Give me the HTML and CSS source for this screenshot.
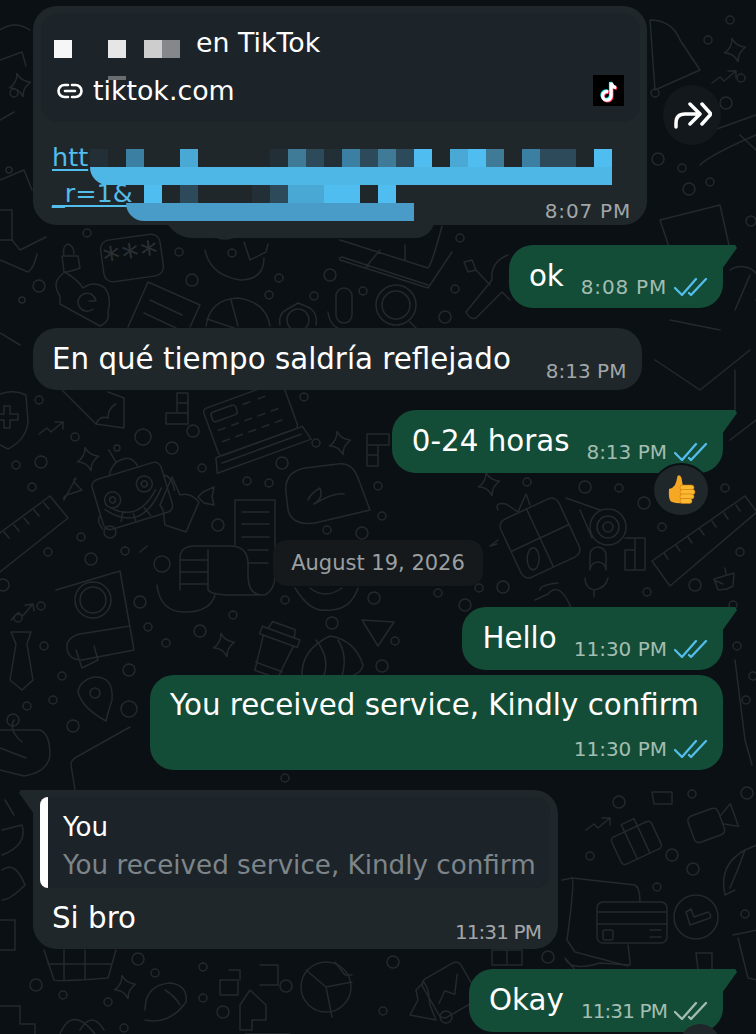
FILE: index.html
```html
<!DOCTYPE html>
<html lang="en">

<head>
    <meta charset="UTF-8">
    <meta name="viewport" content="width=device-width, initial-scale=1.0">
    <title>Chat</title>
    <link rel="stylesheet" href="styles.css">
</head>

<body>

    <!-- wallpaper doodles, hand placed -->
    <svg class="doodles" viewBox="0 0 756 1034" aria-hidden="true">
        <defs>
            <path id="star" d="M0 -12Q2 -3 11 0Q2 3 0 12Q-2 3 -11 0Q-2 -3 0 -12Z" />
            <path id="trend" d="M0 8L8 2L12 6L24 -4M16 -4H24V3" />
        </defs>
        <g class="dots-small">
            <circle cx="39" cy="400" r="4" /><circle cx="75" cy="437" r="4" /><circle cx="16" cy="465" r="4" />
            <circle cx="117" cy="448" r="3" /><circle cx="202" cy="468" r="4" /><circle cx="32" cy="487" r="4" />
            <circle cx="247" cy="481" r="4" /><circle cx="269" cy="483" r="4" /><circle cx="316" cy="443" r="4" />
            <circle cx="304" cy="397" r="4" /><circle cx="378" cy="486" r="4" /><circle cx="382" cy="516" r="4" />
            <circle cx="81" cy="537" r="4" /><circle cx="48" cy="552" r="4" /><circle cx="125" cy="551" r="4" />
            <circle cx="327" cy="530" r="4" /><circle cx="41" cy="606" r="4" /><circle cx="285" cy="600" r="4" />
            <circle cx="18" cy="618" r="4" /><circle cx="44" cy="646" r="4" /><circle cx="62" cy="676" r="4" />
            <circle cx="53" cy="700" r="4" /><circle cx="27" cy="706" r="4" /><circle cx="148" cy="627" r="4" />
            <circle cx="166" cy="643" r="4" /><circle cx="233" cy="615" r="4" /><circle cx="395" cy="641" r="4" />
            <circle cx="285" cy="778" r="4" /><circle cx="63" cy="995" r="4" /><circle cx="155" cy="973" r="4" />
            <circle cx="203" cy="967" r="4" /><circle cx="203" cy="998" r="4" /><circle cx="108" cy="1002" r="4" />
            <circle cx="383" cy="1011" r="4" /><circle cx="124" cy="1028" r="4" /><circle cx="87" cy="233" r="4" />
            <circle cx="179" cy="252" r="4" /><circle cx="232" cy="253" r="4" /><circle cx="460" cy="238" r="4" />
            <circle cx="279" cy="278" r="4" /><circle cx="269" cy="295" r="4" /><circle cx="314" cy="296" r="4" />
            <circle cx="363" cy="291" r="4" /><circle cx="455" cy="289" r="4" /><circle cx="527" cy="482" r="4" />
            <circle cx="619" cy="488" r="4" /><circle cx="662" cy="527" r="4" /><circle cx="725" cy="488" r="4" />
            <circle cx="740" cy="552" r="4" /><circle cx="647" cy="592" r="4" /><circle cx="479" cy="588" r="4" />
            <circle cx="438" cy="593" r="4" /><circle cx="692" cy="794" r="4" /><circle cx="590" cy="856" r="4" />
            <circle cx="657" cy="887" r="4" /><circle cx="745" cy="914" r="4" /><circle cx="655" cy="93" r="4" />
            <circle cx="682" cy="168" r="4" /><circle cx="710" cy="182" r="4" /><circle cx="741" cy="78" r="4" />
            <circle cx="737" cy="646" r="4" /><circle cx="746" cy="700" r="4" /><circle cx="733" cy="605" r="4" />
            <circle cx="753" cy="676" r="4" /><circle cx="730" cy="20" r="4" /><circle cx="14" cy="93" r="4" />
            <circle cx="22" cy="300" r="3" /><circle cx="708" cy="40" r="4" /><circle cx="9" cy="170" r="3" />
        </g>
        <g class="dots-big">
            <circle cx="143" cy="437" r="8" /><circle cx="193" cy="431" r="6" /><circle cx="172" cy="448" r="6" />
            <circle cx="41" cy="462" r="6" /><circle cx="282" cy="463" r="6" /><circle cx="218" cy="525" r="6" />
            <circle cx="91" cy="559" r="6" /><circle cx="162" cy="564" r="8" /><circle cx="110" cy="532" r="6" />
            <circle cx="362" cy="533" r="6" /><circle cx="3" cy="585" r="6" /><circle cx="140" cy="602" r="6" />
            <circle cx="374" cy="598" r="6" /><circle cx="129" cy="670" r="6" /><circle cx="129" cy="709" r="8" />
            <circle cx="73" cy="726" r="6" /><circle cx="200" cy="631" r="6" /><circle cx="332" cy="623" r="6" />
            <circle cx="382" cy="666" r="6" /><circle cx="36" cy="985" r="6" /><circle cx="138" cy="959" r="6" />
            <circle cx="286" cy="986" r="6" /><circle cx="223" cy="1012" r="6" /><circle cx="393" cy="962" r="6" />
            <circle cx="39" cy="286" r="6" /><circle cx="192" cy="280" r="6" /><circle cx="330" cy="275" r="6" />
            <circle cx="445" cy="317" r="6" /><circle cx="585" cy="487" r="6" /><circle cx="644" cy="503" r="6" />
            <circle cx="695" cy="585" r="6" /><circle cx="503" cy="587" r="6" /><circle cx="465" cy="605" r="6" />
            <circle cx="619" cy="802" r="6" /><circle cx="747" cy="793" r="6" /><circle cx="672" cy="855" r="6" />
            <circle cx="693" cy="869" r="6" /><circle cx="548" cy="957" r="6" /><circle cx="446" cy="1017" r="6" />
            <circle cx="658" cy="159" r="6" /><circle cx="689" cy="189" r="6" /><circle cx="751" cy="221" r="5" />
            <circle cx="726" cy="103" r="6" />
        </g>
        <g class="shapes">
            <use href="#star" transform="translate(88 459) rotate(-15)" />
            <use href="#star" transform="translate(340 443) rotate(-15)" />
            <use href="#star" transform="translate(224 645) rotate(-15)" />
            <use href="#star" transform="translate(125 987) rotate(-15)" />
            <use href="#star" transform="translate(489 484) rotate(-15)" />
            <use href="#star" transform="translate(20 85) rotate(-15)" />
            <use href="#star" transform="translate(735 50) rotate(-15)" />
            <use href="#trend" transform="translate(39 426)" />
            <use href="#trend" transform="translate(586 822)" />
            <use href="#trend" transform="translate(10 612) rotate(-10)" />
            <use href="#trend" transform="translate(712 75)" />
            <!-- shield -->
            <path d="M0 394Q14 389 26 395L28 422Q26 440 8 449L0 445M0 414H4V406H10V414H18V420H10V428H4V420H0" />
            <!-- pencil -->
            <path d="M62 390L96 424L124 428L124 398L108 392M96 424Q100 415 108 418Q108 408 116 404" />
            <!-- tetris -->
            <path d="M177 393H188V424H166V413H177ZM177 403H188M177 413H188" />
            <path d="M367 434H389V445H378V466H367ZM367 445H378V455H367" />
            <path d="M625 538H645V570H625V550H635M635 538V570" />
            <!-- cash register -->
            <g transform="translate(254 428) rotate(-20)">
                <rect x="-42" y="-35" width="84" height="50" rx="4" />
                <rect x="-36" y="-29" width="26" height="10" rx="3" />
                <path d="M-34 -10h7M-20 -10h7M-6 -10h7M8 -10h7M22 -10h7M-34 2h7M-20 2h7M-6 2h7M8 2h7M22 2h7M-2 -26h7M14 -26h7" />
                <path d="M-46 15H46L50 30H-50ZM-42 22H42" />
            </g>
            <!-- robot face -->
            <g transform="translate(132 495) rotate(-17)">
                <rect x="-36" y="-25" width="72" height="52" rx="7" />
                <circle cx="-20" cy="-1" r="8" /><circle cx="-20" cy="-1" r="3" />
                <circle cx="15" cy="-7" r="8" /><circle cx="15" cy="-7" r="3" />
                <path d="M-30 6Q-2 40 30 2M-24 6Q-2 28 24 2M-14 14L-18 22M-4 18V27M8 16L12 25" />
                <path d="M-16 -25Q-10 -38 4 -37Q12 -36 14 -25M-6 -37L-9 -50" />
                <path d="M36 -10Q44 -6 42 8M-36 10Q-42 14 -38 24" />
            </g>
            <path d="M172 477L180 495Q190 492 199 502L186 532L165 525L163 510L160 505Z" />
            <path d="M203 492L214 487L212 497L214 505L204 503L198 497Z" />
            <path d="M76 478L64 500Q62 496 70 494L82 490Q70 480 76 478Z" />
            <!-- ruler left -->
            <path d="M0 533L50 496L68 518L0 572M4 532L9 538M14 525L19 531M24 518L29 524M34 510L39 516M44 503L49 509" />
            <!-- magnifier -->
            <path d="M140 552L147 546" />
            <!-- signature bubble -->
            <path d="M286 492Q284 472 305 468L338 464Q352 462 358 478L370 510L315 523Q292 526 288 510ZM308 500Q310 494 320 488Q324 498 314 504Q334 492 344 494" />
            <!-- receipts -->
            <path d="M235 500H275V548M235 500V545M242 512H269M242 524H269M242 537H269" />
            <path d="M180 590V558Q180 546 195 546H230Q248 546 248 564V575Q248 595 262 595M180 560H208M180 572H208M180 584H208M208 550V590Q212 595 232 595H265Q275 590 275 575V552M248 550H268M248 563H268" />
            <path d="M157 585Q160 612 185 612Q210 612 215 595" />
            <!-- target plate -->
            <path d="M295 588Q310 612 325 610Q350 612 358 588M310 588Q325 600 342 588" />
            <!-- book -->
            <path d="M56 590L120 571L134 650L82 660Q66 660 67 644Q70 636 80 634L130 626M76 650L82 668L98 660L94 646" />
            <circle cx="93" cy="600" r="18" /><circle cx="93" cy="600" r="13" />
            <!-- tie -->
            <path d="M11 632H31L27 644L33 680L22 690L10 680L16 644Z" />
            <!-- pin -->
            <path d="M94 677Q114 676 112 700Q108 712 106 721Q82 708 78 692Q80 680 94 677Z" /><circle cx="95" cy="693" r="5" />
            <!-- coffee cup -->
            <g transform="translate(275 650) rotate(20)">
                <path d="M-16 -10L-12 26H12L16 -10M-20 -10H20V-18H-20ZM-14 -18L-12 -26H12L14 -18M-14 18H14" />
            </g>
            <!-- croissant -->
            <path d="M302 678Q300 650 330 636Q355 640 363 665Q362 672 352 676M316 640Q332 660 322 680M338 640Q348 656 342 676" />
            <!-- send arrow -->
            <path d="M362 620L394 622L378 646Z" />
            <!-- pushpin and note -->
            <path d="M0 730H40Q50 734 50 755Q48 772 24 776L0 770M14 720Q8 730 22 742M0 748L26 758" /><circle cx="13" cy="720" r="6" />
            <!-- rounded card behind green -->
            <path d="M75 790L71 765Q70 760 80 755L130 727" />
            <!-- lock -->
            <path d="M62 256H78L80 268Q70 272 64 272ZM64 256Q62 246 68 244Q74 246 74 254" />
            <!-- password -->
            <g transform="translate(132 258) rotate(-8)">
                <rect x="-30" y="-21" width="60" height="42" rx="9" />
                <text class="stars" x="0" y="10" text-anchor="middle">***</text>
            </g>
            <!-- check box -->
            <path d="M0 260L28 272Q34 268 37 254M12 240L20 250L46 237" />
            <!-- cloud -->
            <path d="M60 296Q50 282 65 272Q78 280 83 288Q94 280 105 288Q112 298 108 312Q110 322 100 326L60 304Z" />
            <path d="M96 301A9 9 0 1 0 93 309M92 294L96 301L89 301" />
            <!-- receipt -->
            <path d="M128 327L148 282L200 305L190 327M150 300L182 315M144 313L176 328" />
            <!-- pie -->
            <path d="M206 326Q210 299 238 298Q266 302 270 326M231 300L238 326M207 319L234 328" />
            <!-- head -->
            <path d="M205 250Q210 275 240 280Q264 280 264 258M244 242L250 260L266 252L268 244M210 230Q220 245 238 235" />
            <!-- gear -->
            <circle cx="298" cy="320" r="11" /><path d="M280 325Q278 314 286 310L298 303L310 308Q318 314 316 325" />
            <!-- mic -->
            <path d="M336 296A8 8 0 0 1 352 296V315A8 8 0 0 1 336 315ZM328 312Q330 328 344 330Q356 328 352 330" />
            <path d="M585 578Q585 588 594 590Q606 588 608 578M594 590V597" />
            <path d="M590 570A8 8 0 0 1 606 570V565M590 570V555A8 8 0 0 1 606 555V570" />
            <!-- magnifier mid -->
            <circle cx="396" cy="305" r="20" /><circle cx="396" cy="305" r="14" /><path d="M410 322L418 330" />
            <!-- laptop -->
            <path d="M340 240L428 268Q432 264 442 226M452 252L428 288L340 260Q338 258 342 257L428 285M380 250L365 268M405 260V245" />
            <!-- wrench -->
            <path d="M464 262L472 260L476 270L468 272ZM476 270L490 285M508 255Q490 262 492 280L466 312Q470 320 476 318L502 292L510 300" />
            <!-- gift -->
            <g transform="translate(540 538) rotate(-25)">
                <rect x="-32" y="-32" width="64" height="64" rx="8" />
                <path d="M0 -32V32M-32 0H32" />
                <ellipse cx="-15" cy="16" rx="6" ry="11" transform="rotate(25 -15 16)" />
            </g>
            <path d="M498 510Q494 502 506 504L518 512L526 494L530 505M498 540L490 546L497 544" />
            <!-- tape -->
            <circle cx="608" cy="527" r="18" /><circle cx="608" cy="527" r="11" /><circle cx="608" cy="527" r="5" />
            <path d="M566 498L600 510M580 510L592 538" />
            <!-- ruler right -->
            <path d="M652 561L745 496L757 512L670 586ZM664 553L668 559M676 545L680 551M688 537L692 543M700 529L704 535M712 521L716 527M724 513L728 519M736 505L740 511" />
            <!-- bottle -->
            <path d="M714 579L734 573L733 586L727 589L718 590ZM725 568L726 574M714 580L723 584" />
            <!-- phone corner -->
            <path d="M535 600L548 594Q560 580 572 610M540 590Q540 585 558 583" />
            <!-- card and phone -->
            <path d="M562 880L572 878L635 885Q640 888 640 902M592 990L565 958Q570 972 600 963L630 965Q630 960 628 945" />
            <path d="M572 878Q575 880 567 940L575 952L628 966" />
            <rect x="597" y="902" width="70" height="41" rx="6" />
            <path d="M597 912H667M597 924H667M650 930H661M650 937H661" /><rect x="603" y="930" width="10" height="10" rx="2" />
            <!-- clock -->
            <circle cx="696" cy="917" r="22" /><path d="M686 912L690 925L710 918Q712 915 708 912L694 917L691 909Z" />
            <!-- suitcase -->
            <g transform="translate(636 842) rotate(-25)">
                <rect x="-22" y="-14" width="44" height="30" rx="4" />
                <path d="M-6 -14V16M8 -14V16M-6 -14V-22H8V-14" />
            </g>
            <!-- camera -->
            <g transform="translate(710 824) rotate(-20)">
                <rect x="-20" y="-14" width="32" height="28" rx="5" />
                <path d="M12 -4L26 -12V12L12 4" />
            </g>
            <path d="M652 792H672V804H654Z" />
            <!-- balloon -->
            <path d="M725 895Q718 865 745 850L757 845M725 895L735 890M730 888Q738 870 745 850" />
            <!-- jar -->
            <path d="M733 935L757 930M738 938L748 978L757 980" />
            <path d="M696 953H712V970H698Z" />
            <!-- chart card -->
            <g transform="translate(450 990) rotate(-30)">
                <rect x="-22" y="-22" width="44" height="44" rx="6" />
                <path d="M-16 6L-5 -2L2 6L14 -10" />
            </g>
            <!-- bottle bottom -->
            <path d="M410 1015L418 1000L416 990L424 982L428 990L430 1005L436 1020Z" />
            <!-- tetris bottom -->
            <path d="M492 950H522V965H492ZM507 950V965" />
            <!-- basket -->
            <path d="M44 950L54 980Q56 982 108 978L116 950M64 950V980M85 950V980M48 964H112" />
            <!-- pie bottom left -->
            <circle cx="326" cy="987" r="25" /><path d="M306 970L326 987M326 987L332 1017M326 987L352 982M335 962L345 975H352" />
            <!-- taco -->
            <path d="M145 1010Q145 985 170 983Q188 985 186 1002Q170 1025 145 1020M165 990Q175 996 180 1005" />
            <!-- small bits -->
            <path d="M220 980H238V995H220ZM229 970H240V980M260 965H278V985H260" />
            <path d="M240 1005L250 990L266 1005V1020H252V1030H240Z" />
            <path d="M0 1006H20V1024H35V1034M20 1006V1024" />
            <path d="M60 1034Q72 1005 95 1034" /><path d="M80 1030Q92 1010 104 1030" />
            <path d="M245 1034H290" />
            <path d="M0 30Q15 20 30 30M0 60L22 52L26 66" />
            <path d="M650 20Q672 20 680 40L700 70L655 90Z" />
            <path d="M714 130L756 115M740 135L756 150M700 165Q710 155 756 135" />
            <path d="M660 220L720 205L730 250H670Z" />
            <path d="M0 120L14 112M0 180L24 170L32 190" />
            <path d="M0 210H12V240H0" />
            <path d="M660 290L700 300M670 320L720 330M735 310L750 275" />
            <path d="M655 360L700 390L750 350M735 370V410" />
            <path d="M0 333L20 345" />
            <path d="M655 420L700 430M730 440L756 420" />
            <path d="M730 270A20 20 0 0 1 756 300" />
            <path d="M735 660L745 740L752 765" />
            <path d="M5 800L14 815M2 830L22 825Q28 845 2 855" />
            <path d="M2 870Q15 860 25 885Q10 900 2 900" />
            <path d="M0 920H15V950H0" />
        </g>
    </svg>

    <div class="chat">

        <div class="msg msg-in link-msg">
            <div class="preview">
                <div class="preview-title">
                    <div class="name-pixels">
                        <i class="p-white"></i><i></i><i></i><i class="p-light"></i><i></i><i class="p-mid"></i><i class="p-grey"></i>
                    </div>
                    <span>en TikTok</span>
                    <b class="pixel-strip"></b>
                </div>
                <div class="preview-site">
                    <svg class="link-icon" viewBox="0 0 26 18">
                        <path d="M11 3H7.500a6 6 0 0 0 0 12H11M15 3h3.500a6 6 0 0 1 0 12H15M8 9h10" />
                    </svg>
                    <span>tiktok.com</span>
                    <svg class="tiktok-logo" viewBox="0 0 31 31">
                        <rect width="31" height="31" fill="#000" />
                        <g fill="none" stroke-width="3.200">
                            <path stroke="#25f4ee" d="M14.500 16a4.300 4.300 0 1 0 3 4V7q.5 4 5 5" />
                            <path stroke="#fe2c55" d="M16 17.500a4.300 4.300 0 1 0 3 4V8.500q.5 4 5 5" />
                            <path stroke="#fff" d="M15.200 16.800a4.300 4.300 0 1 0 3 4V7.800q.5 4 5 5" />
                        </g>
                    </svg>
                </div>
            </div>
            <div class="link-body">
                <div class="link-text">
                    <a>htt</a><br>
                    <a>_r=1&amp;</a>
                </div>
                <span class="time time-wide">8:07 PM</span>
                <div class="redact">
                    <i class="b-1"></i><i></i><i class="b-4"></i><i></i><i></i><i class="b-5"></i><i></i><i></i><i></i><i></i>
                    <i class="b-1"></i><i class="b-3"></i><i class="b-2"></i><i class="b-1"></i><i class="b-4"></i><i class="b-2"></i><i class="b-3"></i><i class="b-2"></i><i class="b-6"></i><i></i>
                    <i class="b-5"></i><i class="b-6"></i><i class="b-3"></i><i></i><i class="b-4"></i><i class="b-2"></i><i class="b-2"></i><i></i><i class="b-6"></i>
                    <i class="band-top"></i>
                    <i></i><i></i><i></i><i class="b-6"></i><i></i><i class="b-2"></i><i></i><i></i><i></i><i class="b-1"></i>
                    <i class="b-2"></i><i class="b-5"></i><i class="b-5"></i><i class="b-6"></i><i class="b-6"></i><i></i><i class="b-6"></i>
                    <i></i><i></i><i></i><i></i><i></i><i></i><i></i><i></i><i></i><i></i><i></i>
                    <i class="band-bottom"></i>
                </div>
            </div>
            <div class="blob"></div>
            <div class="forward">
                <svg viewBox="0 0 40 28">
                    <path d="M4 26V22Q4 13 13 13H27M18 3L28 13L18 23M30 3L39 13L30 23" />
                </svg>
            </div>
        </div>

        <div class="msg msg-out tail gap-lg">
            <span class="text">ok</span>
            <span class="meta"><span class="time time-wide">8:08 PM</span>
                <svg class="ticks" viewBox="0 0 34 20"><path d="M1 11L8 18L22 2M15 16L17 18L32 2" /></svg></span>
        </div>

        <div class="msg msg-in gap-lg roomy">
            <span class="text">En qué tiempo saldría reflejado</span>
            <span class="meta"><span class="time">8:13 PM</span></span>
        </div>

        <div class="msg msg-out tail gap-lg">
            <span class="text">0-24 horas</span>
            <span class="meta"><span class="time">8:13 PM</span>
                <svg class="ticks" viewBox="0 0 34 20"><path d="M1 11L8 18L22 2M15 16L17 18L32 2" /></svg></span>
            <div class="reaction">
                <svg viewBox="0 0 32 32">
                    <path class="thumb" d="M4 15Q3 27 7 28Q13 30 18 29L18 13L16.500 4Q15 0 12.500 2Q11.500 8 10 11Q8 14 4 15Z" />
                    <rect class="finger" x="15" y="11" width="14" height="5" rx="2.500" />
                    <rect class="finger" x="15" y="15.500" width="15" height="5" rx="2.500" />
                    <rect class="finger" x="15" y="20" width="14" height="5" rx="2.500" />
                    <rect class="finger" x="15" y="24.500" width="12" height="5" rx="2.500" />
                </svg>
            </div>
        </div>

        <div class="date">August 19, 2026</div>

        <div class="msg msg-out tail gap-date">
            <span class="text">Hello</span>
            <span class="meta"><span class="time">11:30 PM</span>
                <svg class="ticks" viewBox="0 0 34 20"><path d="M1 11L8 18L22 2M15 16L17 18L32 2" /></svg></span>
        </div>

        <div class="msg msg-out stacked gap-sm">
            <span class="text">You received service, Kindly confirm</span>
            <span class="meta"><span class="time">11:30 PM</span>
                <svg class="ticks" viewBox="0 0 34 20"><path d="M1 11L8 18L22 2M15 16L17 18L32 2" /></svg></span>
        </div>

        <div class="msg msg-in tail reply-msg gap-lg">
            <div class="reply">
                <div class="reply-name">You</div>
                <div class="reply-text">You received service, Kindly confirm</div>
            </div>
            <div class="reply-body">
                <span class="text">Si bro</span>
                <span class="time time-narrow">11:31 PM</span>
            </div>
        </div>

        <div class="msg msg-out tail gap-lg">
            <span class="text">Okay</span>
            <span class="meta"><span class="time time-narrow">11:31 PM</span>
                <svg class="ticks ticks-grey" viewBox="0 0 34 20"><path d="M1 11L8 18L22 2M15 16L17 18L32 2" /></svg></span>
            <div class="reaction reaction-cut"></div>
        </div>

    </div>

</body>

</html>
```

FILE: styles.css
```css
html,
body {
    margin: 0;
    padding: 0;
    height: 1034px;
    overflow: hidden;
}

body {
    position: relative;
    background-color: #0b1014;
    font-family: "DejaVu Sans", sans-serif;
    color: #fff;
}

/* wallpaper */
.doodles {
    position: absolute;
    top: 0;
    left: 0;
    width: 756px;
    height: 1034px;
    fill: none;
    stroke: #24292d;
    stroke-width: 1.5;
    stroke-linejoin: round;
    stroke-linecap: round;
}

.stars {
    font-size: 34px;
    fill: #2a2f33;
    stroke: none;
    letter-spacing: 2px;
}

.chat {
    position: relative;
    display: flex;
    flex-direction: column;
    padding: 6px 33px 0;
}

/* bubbles */
.msg {
    position: relative;
    display: flex;
    align-items: flex-end;
    box-sizing: border-box;
    border-radius: 24px;
    padding: 13px 15px 8px 20px;
}

.msg-in {
    align-self: flex-start;
    background-color: #20272a;
    padding-left: 19px;
    padding-right: 16px;
}

.msg-out {
    align-self: flex-end;
    background-color: #144d37;
}

.tail {
    border-top-right-radius: 0;
}

.tail::after {
    content: "";
    position: absolute;
    top: 0;
    right: -14px;
    width: 15px;
    height: 24px;
    background-color: inherit;
    clip-path: polygon(0 0, 88% 0, 100% 12%, 0 100%);
}

.msg-in.tail {
    border-top-right-radius: 24px;
    border-top-left-radius: 0;
}

.msg-in.tail::after {
    right: auto;
    left: -14px;
    clip-path: polygon(100% 0, 12% 0, 0 12%, 100% 100%);
}

.gap-lg {
    margin-top: 20px;
}

.gap-sm {
    margin-top: 5px;
}

.gap-date {
    margin-top: 21px;
}

.text {
    font-size: 29.300px;
    line-height: 36px;
    margin-bottom: 6px;
}

.time {
    font-size: 20px;
    line-height: 24px;
    white-space: nowrap;
}

.time-wide {
    letter-spacing: 0.800px;
}

.time-narrow {
    letter-spacing: -0.900px;
}

.meta {
    display: flex;
    align-items: center;
    gap: 7px;
    margin-left: 17px;
    margin-bottom: 1px;
    color: #a3bdb1;
}

.msg-in .time {
    color: #a2a6a8;
}

.roomy {
    padding-bottom: 7px;
}

.roomy .meta {
    margin-left: 35px;
    margin-bottom: 0;
}

.ticks {
    width: 34px;
    height: 20px;
    fill: none;
    stroke: #53bdeb;
    stroke-width: 2.300;
    stroke-linecap: round;
    stroke-linejoin: round;
}

.ticks-grey {
    stroke: #a3bdb1;
}

.stacked {
    flex-direction: column;
    align-items: flex-start;
    width: 573px;
    padding-top: 12px;
    padding-bottom: 9px;
}

.stacked .text {
    margin-bottom: 14px;
}

.stacked .meta {
    align-self: flex-end;
    margin-bottom: 0;
}

/* link message */
.link-msg {
    display: block;
    width: 614px;
    height: 219px;
    padding: 7px 7px 0 8px;
}

.preview {
    height: 109px;
    box-sizing: border-box;
    background-color: #1c2329;
    border-radius: 18px;
    padding: 18px 16px 0 13px;
    font-size: 26.800px;
}

.preview-title {
    position: relative;
    display: flex;
    align-items: center;
    gap: 16px;
    height: 36px;
}

.preview-title span {
    margin-bottom: 14px;
}

.name-pixels {
    display: grid;
    grid-template-columns: repeat(7, 18px);
    grid-auto-rows: 18px;
}

.p-white {
    background-color: #f6f6f6;
}

.p-light {
    background-color: #e6e6e6;
}

.p-mid {
    background-color: #cdcdcd;
}

.p-grey {
    background-color: #85888a;
}

.pixel-strip {
    position: absolute;
    left: 54px;
    bottom: -13px;
    width: 18px;
    height: 4px;
    background-color: #6a6d70;
}

.preview-site {
    display: flex;
    align-items: center;
    gap: 10px;
    margin-top: 8px;
    padding-left: 3px;
}

.preview-site span {
    flex: 1;
}

.link-icon {
    width: 26px;
    height: 18px;
    fill: none;
    stroke: #fff;
    stroke-width: 2.600;
    stroke-linecap: round;
}

.tiktok-logo {
    width: 31px;
    height: 31px;
}

.link-body {
    position: relative;
    display: flex;
    align-items: flex-end;
    justify-content: space-between;
    padding: 17px 9px 0 11px;
}

.link-text {
    font-size: 25.500px;
    line-height: 36px;
    height: 84px;
}

.link-text a {
    color: #53bdeb;
    text-decoration: underline;
    text-underline-offset: 3px;
}

.redact {
    position: absolute;
    top: 27px;
    left: 49px;
    display: grid;
    grid-template-columns: repeat(29, 18px);
    grid-auto-rows: 18px;
}

.b-1 {
    background-color: #232f37;
}

.b-2 {
    background-color: #2c4a5a;
}

.b-3 {
    background-color: #3f7a96;
}

.b-4 {
    background-color: #3b80a3;
}

.b-5 {
    background-color: #4aa8d4;
}

.b-6 {
    background-color: #50bdf0;
}

.band-top {
    grid-column: 1 / span 29;
    background-color: #4fb7e6;
    border-bottom-left-radius: 18px;
}

.band-bottom {
    grid-column: 3 / span 16;
    background-color: #4a9cc8;
    border-bottom-left-radius: 18px;
}

.blob {
    position: absolute;
    z-index: -1;
    left: 130px;
    bottom: -13px;
    width: 272px;
    height: 40px;
    background-color: #20272a;
    border-radius: 0 0 20px 30px;
}

.forward {
    position: absolute;
    top: 79px;
    left: 630px;
    display: flex;
    align-items: center;
    justify-content: center;
    width: 58px;
    height: 60px;
    border-radius: 50%;
    background-color: #13181c;
}

.forward svg {
    width: 40px;
    height: 28px;
    fill: none;
    stroke: #fff;
    stroke-width: 3.500;
    stroke-linecap: round;
    stroke-linejoin: round;
}

/* reaction */
.reaction {
    position: absolute;
    right: 15px;
    bottom: -42px;
    display: flex;
    align-items: center;
    justify-content: center;
    width: 54px;
    height: 50px;
    border-radius: 50%;
    background-color: #20272a;
    box-shadow: 0 0 0 2px #0b1014;
}

.reaction svg {
    width: 32px;
    height: 32px;
}

.thumb {
    fill: #f6a723;
}

.finger {
    fill: #fbb92f;
    stroke: #c9730f;
    stroke-width: 0.600;
}

.reaction-cut {
    right: 3px;
    bottom: -32px;
    width: 40px;
    height: 40px;
    box-shadow: none;
}

/* date */
.date {
    align-self: center;
    margin-top: 67px;
    padding: 10px 18px;
    border-radius: 14px;
    background-color: #15191c;
    color: #9a9fa2;
    font-size: 21px;
    line-height: 26px;
}

/* reply */
.reply-msg {
    display: block;
    width: 525px;
    height: 159px;
    padding: 7px 8px 0 7px;
}

.reply {
    box-sizing: border-box;
    height: 91px;
    background-color: #1c2329;
    border-left: 8px solid #fff;
    border-radius: 8px 14px 14px 8px;
    padding: 11px 0 0 15px;
    font-size: 26.200px;
}

.reply-name {
    line-height: 39px;
}

.reply-text {
    color: #7d8589;
    line-height: 36px;
    white-space: nowrap;
}

.reply-body {
    display: flex;
    align-items: flex-end;
    justify-content: space-between;
    padding: 12px 9px 0 12px;
}

.reply-body .text {
    margin-bottom: 8px;
}
```
